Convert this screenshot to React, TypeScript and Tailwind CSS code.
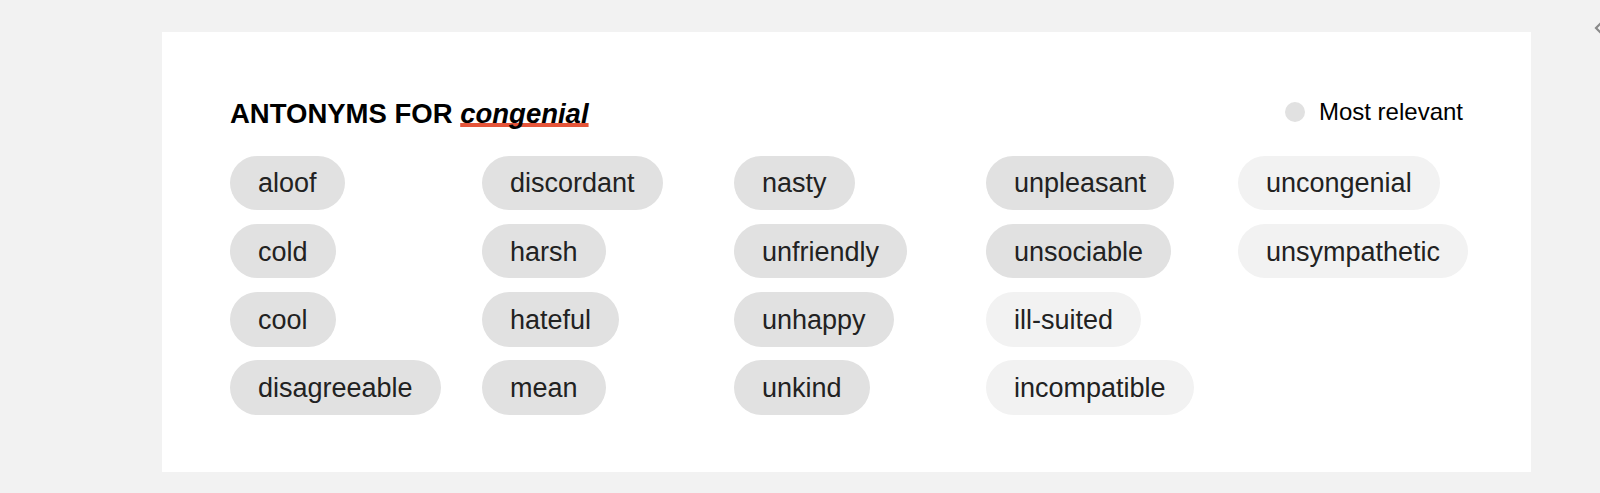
import React from "react";

type Chip = { t: string; light?: boolean };

const columns: Chip[][] = [
  [{ t: "aloof" }, { t: "cold" }, { t: "cool" }, { t: "disagreeable" }],
  [{ t: "discordant" }, { t: "harsh" }, { t: "hateful" }, { t: "mean" }],
  [{ t: "nasty" }, { t: "unfriendly" }, { t: "unhappy" }, { t: "unkind" }],
  [
    { t: "unpleasant" },
    { t: "unsociable" },
    { t: "ill-suited", light: true },
    { t: "incompatible", light: true },
  ],
  [
    { t: "uncongenial", light: true },
    { t: "unsympathetic", light: true },
  ],
];

function ChipView({ c }: { c: Chip }) {
  return (
    <div
      className={
        c.light
          ? "flex h-[54.5px] w-fit items-center whitespace-nowrap rounded-full bg-[#f2f2f2] px-[28px] pt-[2px] text-[27px] leading-none text-[#222222]"
          : "flex h-[54.5px] w-fit items-center whitespace-nowrap rounded-full bg-[#e1e1e1] px-[28px] pt-[2px] text-[27px] leading-none text-[#222222]"
      }
    >
      {c.t}
    </div>
  );
}

export default function App() {
  return (
    <div className="relative h-[493px] w-[1600px] overflow-hidden bg-[#f2f2f2] font-['Liberation_Sans',Arial,Helvetica,sans-serif]">
      <div className="ml-[162px] mt-[32px] h-[440px] w-[1369px] bg-white px-[68px] pt-[66px]">
        <div className="flex items-start justify-between">
          <h2 className="text-[27.5px] font-bold leading-[32px] text-black">
            ANTONYMS FOR{" "}
            <span className="italic underline decoration-[#e5553a] decoration-[4px] underline-offset-0 [text-decoration-skip-ink:none]">
              congenial
            </span>
          </h2>
          <div className="flex items-center gap-[14px] text-[24px] leading-[28px] text-black">
            <span className="h-[20px] w-[20px] rounded-full bg-[#e1e1e1]" />
            <span>Most relevant</span>
          </div>
        </div>
        <div className="mt-[25.5px] flex">
          {columns.map((col, i) => (
            <div
              key={i}
              className={
                i < 4
                  ? "flex w-[252px] shrink-0 flex-col gap-[13.8px]"
                  : "flex flex-1 flex-col gap-[13.8px]"
              }
            >
              {col.map((c) => (
                <ChipView key={c.t} c={c} />
              ))}
            </div>
          ))}
        </div>
      </div>
      <svg
        className="absolute left-[1594px] top-[21px]"
        width="10"
        height="14"
        viewBox="0 0 10 14"
      >
        <path d="M7 2 L2 7 L7 12" fill="none" stroke="#8a8a8a" strokeWidth="2.2" />
      </svg>
    </div>
  );
}
